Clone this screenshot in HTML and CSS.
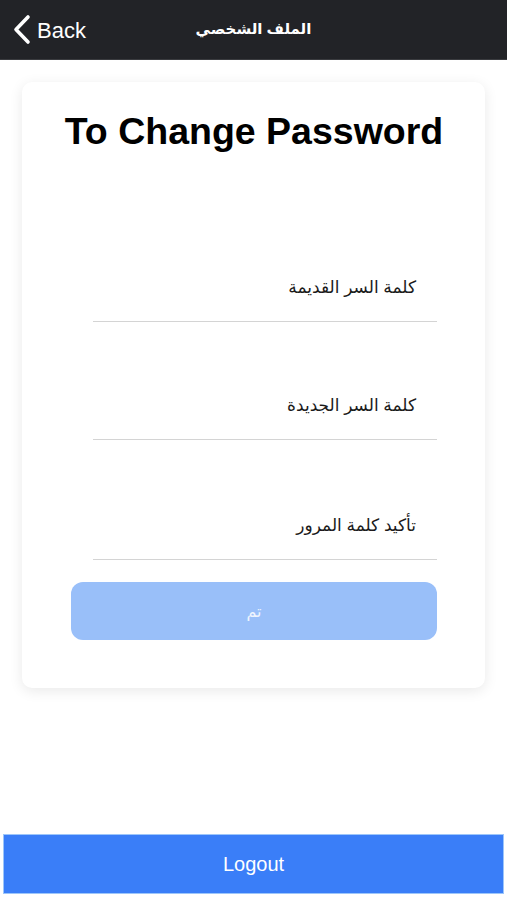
FILE: index.html
```html
<!DOCTYPE html>
<html lang="ar">
<head>
<meta charset="utf-8">
<title>Change Password</title>
<link rel="stylesheet" href="styles.css">
</head>
<body>
<div class="page">
  <header class="topbar">
    <a class="back" href="#">
      <svg class="chev" width="20" height="32" viewBox="0 0 20 32" aria-hidden="true">
        <path d="M15 3 L3 15.5 L15 28" fill="none" stroke="#ffffff" stroke-width="3.6" stroke-linecap="round" stroke-linejoin="round"/>
      </svg>
      <span>Back</span>
    </a>
    <div class="title" dir="rtl">الملف الشخصي</div>
  </header>

  <main class="content">
    <section class="card">
      <h1 class="card-title">To Change Password</h1>
      <div class="form">
        <label class="field f1" dir="rtl"><span>كلمة السر القديمة</span></label>
        <label class="field f2" dir="rtl"><span>كلمة السر الجديدة</span></label>
        <label class="field f3" dir="rtl"><span>تأكيد كلمة المرور</span></label>
        <button class="submit" type="button">تم</button>
      </div>
    </section>
  </main>

  <button class="logout" type="button">Logout</button>
</div>
</body>
</html>
```

FILE: styles.css
```css
html, body {
  margin: 0;
  padding: 0;
  background: #ffffff;
}

body {
  font-family: "Liberation Sans", Arial, "DejaVu Sans", sans-serif;
  color: #000;
}

.page {
  min-height: 900px;
  display: flex;
  flex-direction: column;
}

.topbar {
  height: 60px;
  background: #222327;
  display: flex;
  align-items: center;
  position: relative;
  box-sizing: border-box;
  padding-left: 13px;
  border-bottom: 1px solid #3a3b3f;
}

.back {
  display: flex;
  align-items: center;
  gap: 4px;
  color: #ffffff;
  text-decoration: none;
  font-size: 22px;
  height: 60px;
}

.chev {
  display: block;
}

.back span {
  line-height: 1;
  margin-top: 2px;
}

.title {
  position: absolute;
  left: 0;
  right: 0;
  top: 0;
  height: 60px;
  display: flex;
  align-items: center;
  justify-content: center;
  color: #ffffff;
  font-weight: bold;
  font-size: 15px;
  pointer-events: none;
  padding-bottom: 3px;
  box-sizing: border-box;
}

.content {
  padding: 22px 22px 0;
}

.card {
  background: #ffffff;
  border-radius: 10px;
  box-shadow: 0 3px 14px rgba(0, 0, 0, 0.09);
  padding: 28px 48px 48px 49px;
}

.card-title {
  margin: 0 -10px 51px;
  font-size: 37.5px;
  line-height: 42px;
  font-weight: bold;
  text-align: center;
}

.form {
  display: flex;
  flex-direction: column;
}

.field {
  box-sizing: border-box;
  height: 118px;
  margin-left: 22px;
  border-bottom: 1px solid #d4d4d4;
  display: flex;
  flex-direction: column;
  justify-content: flex-end;
  padding: 0 21px 22px 0;
  font-size: 17px;
  line-height: 22px;
  color: #1a1a1a;
  text-align: right;
}

.f1 {
  height: 119px;
}

.f3 {
  height: 120px;
}

.submit {
  margin-top: 22px;
  height: 58px;
  border: none;
  border-radius: 12px;
  background: #99bff9;
  color: #eef4fe;
  font-family: "Liberation Sans", Arial, "DejaVu Sans", sans-serif;
  font-size: 16px;
  padding: 0;
}

.logout {
  margin: auto 3px 6px;
  height: 60px;
  border: 1px solid #9dc6fa;
  background: #3a7ef8;
  color: #ffffff;
  font-family: "Liberation Sans", Arial, sans-serif;
  font-size: 20px;
  padding: 0;
}
```
